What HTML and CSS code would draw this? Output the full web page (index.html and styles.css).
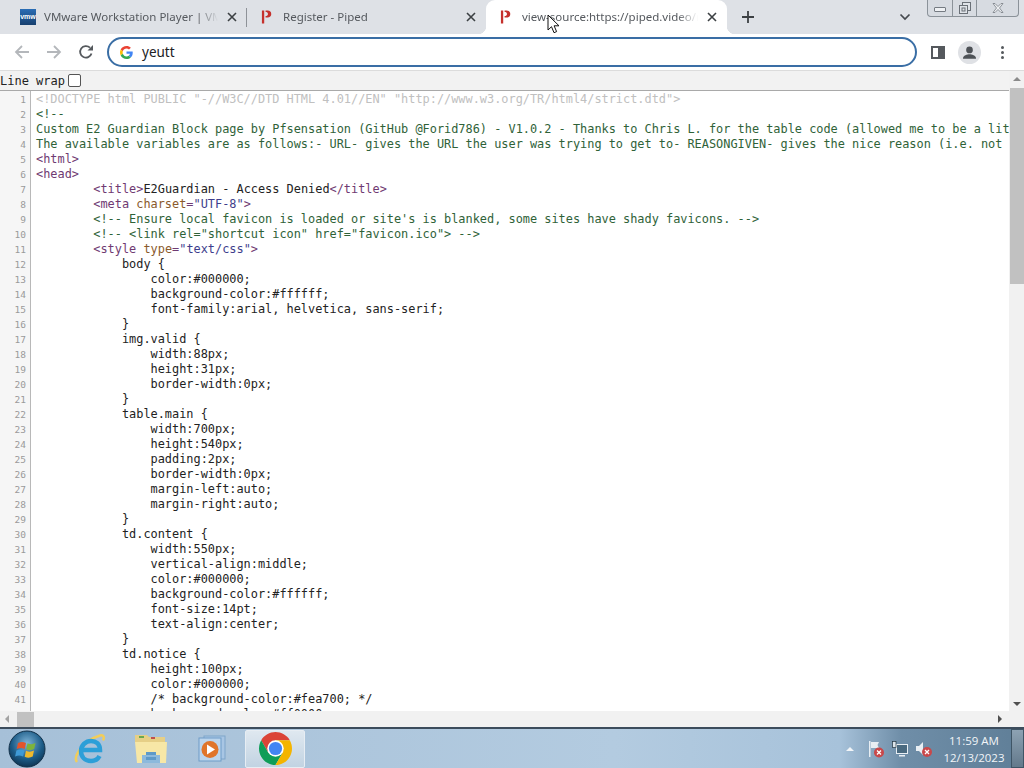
FILE: index.html
```html
<!DOCTYPE html>
<html>
<head>
    <title>view-source:https://piped.video/</title>
    <link rel="stylesheet" href="styles.css">
</head>
<body>
    <div class="tabstrip">
        <div class="tab">
            <span class="vmw-icon">vmw</span>
            <span class="tab-title">VMware Workstation Player | VMware</span>
            <svg class="tab-close" viewBox="0 0 10 10"><path d="M1 1l8 8M9 1l-8 8"/></svg>
        </div>
        <div class="tab tab-sep">
            <svg class="piped-icon" viewBox="0 0 12 14"><path d="M1 0h2.500v14H1zM5 0h2.200c2.600 0 4 1.500 4 3.700 0 2.400-1.600 3.900-4 3.900H5V6c1.500 0 2.600-.6 2.600-2.200S6.600 1.500 5 1.500z"/></svg>
            <span class="tab-title">Register - Piped</span>
            <svg class="tab-close" viewBox="0 0 10 10"><path d="M1 1l8 8M9 1l-8 8"/></svg>
        </div>
        <div class="tab tab-active">
            <svg class="piped-icon" viewBox="0 0 12 14"><path d="M1 0h2.500v14H1zM5 0h2.200c2.600 0 4 1.500 4 3.700 0 2.400-1.600 3.900-4 3.900H5V6c1.500 0 2.600-.6 2.600-2.200S6.600 1.500 5 1.500z"/></svg>
            <span class="tab-title">view-source:https://piped.video/register</span>
            <svg class="tab-close" viewBox="0 0 10 10"><path d="M1 1l8 8M9 1l-8 8"/></svg>
        </div>
        <svg class="new-tab" viewBox="0 0 14 14"><path d="M7 1v12M1 7h12"/></svg>
        <svg class="tab-list" viewBox="0 0 12 8"><path d="M1.500 1.500L6 6l4.500-4.500"/></svg>
        <div class="win-controls">
            <div class="win-btn win-min"><span class="min-glyph"></span></div>
            <div class="win-btn win-max">
                <svg viewBox="0 0 12 12"><rect x="3.500" y="0.500" width="8" height="8"/><rect x="0.500" y="3.500" width="8" height="8"/><rect x="3" y="6" width="3" height="3"/></svg>
            </div>
            <div class="win-btn win-close">
                <svg viewBox="0 0 12 10"><path d="M1 .5h2l3 3 3-3h2L7.500 5 11 9.500H9L6 6.500 3 9.500H1L4.500 5z"/></svg>
            </div>
        </div>
    </div>

    <div class="toolbar">
        <svg class="nav-icon nav-off" viewBox="0 0 16 16"><path d="M15 8H2M8 2L2 8l6 6"/></svg>
        <svg class="nav-icon nav-off" viewBox="0 0 16 16"><path d="M1 8h13M8 2l6 6-6 6"/></svg>
        <svg class="nav-icon nav-reload" viewBox="0 0 16 16"><path d="M13.500 9.500A5.800 5.800 0 1 1 12 3.700"/><path class="fill" d="M9.500 6.500H15V1z"/></svg>
        <div class="omnibox">
            <svg class="g-icon" viewBox="0 0 48 48">
                <path fill="#EA4335" d="M24 9.500c3.540 0 6.710 1.220 9.210 3.600l6.850-6.850C35.900 2.380 30.470 0 24 0 14.620 0 6.510 5.380 2.560 13.220l7.980 6.190C12.430 13.720 17.740 9.500 24 9.500z"/>
                <path fill="#4285F4" d="M46.980 24.550c0-1.570-.15-3.090-.38-4.550H24v9.020h12.940c-.58 2.960-2.260 5.480-4.780 7.180l7.730 6c4.510-4.180 7.090-10.360 7.090-17.650z"/>
                <path fill="#FBBC05" d="M10.530 28.590c-.48-1.450-.76-2.990-.76-4.590s.27-3.140.76-4.590l-7.980-6.190C.92 16.460 0 20.120 0 24c0 3.880.92 7.540 2.560 10.780l7.970-6.190z"/>
                <path fill="#34A853" d="M24 48c6.480 0 11.930-2.130 15.890-5.810l-7.730-6c-2.150 1.450-4.920 2.300-8.160 2.300-6.260 0-11.570-4.220-13.470-9.910l-7.980 6.190C6.510 42.620 14.620 48 24 48z"/>
            </svg>
            <span class="omni-text">yeutt</span>
        </div>
        <div class="side-panel"><span></span></div>
        <div class="profile">
            <svg viewBox="0 0 22 22"><circle cx="11" cy="11" r="11" fill="#dfe1e5"/><circle cx="11" cy="8.500" r="3.200" fill="#4d5156"/><path fill="#4d5156" d="M4.800 16.500c0-2.700 4-3.800 6.200-3.800s6.200 1.100 6.200 3.800V17H4.800z"/></svg>
        </div>
        <div class="menu-dots"><span></span><span></span><span></span></div>
    </div>

    <div class="viewer">
        <div class="viewer-top">
            <div class="viewer-main">
                <div class="wrap-row">
                    <label class="wrap-label">Line wrap</label>
                    <input class="wrap-check" type="checkbox">
                </div>
                <div class="code">
                    <div class="gutter">
                        <div>1</div><div>2</div><div>3</div><div>4</div><div>5</div><div>6</div><div>7</div>
                        <div>8</div><div>9</div><div>10</div><div>11</div><div>12</div><div>13</div><div>14</div>
                        <div>15</div><div>16</div><div>17</div><div>18</div><div>19</div><div>20</div><div>21</div>
                        <div>22</div><div>23</div><div>24</div><div>25</div><div>26</div><div>27</div><div>28</div>
                        <div>29</div><div>30</div><div>31</div><div>32</div><div>33</div><div>34</div><div>35</div>
                        <div>36</div><div>37</div><div>38</div><div>39</div><div>40</div><div>41</div><div>42</div>
                    </div>
                    <div class="source">
                        <div class="dt">&lt;!DOCTYPE html PUBLIC "-//W3C//DTD HTML 4.01//EN" "http://www.w3.org/TR/html4/strict.dtd"&gt;</div>
                        <div class="cm">&lt;!--</div>
                        <div class="cm">Custom E2 Guardian Block page by Pfsensation (GitHub @Forid786) - V1.0.2 - Thanks to Chris L. for the table code (allowed me to be a little lazy)</div>
                        <div class="cm">The available variables are as follows:- URL- gives the URL the user was trying to get to- REASONGIVEN- gives the nice reason (i.e. not so technical)</div>
                        <div><span class="tg">&lt;html&gt;</span></div>
                        <div><span class="tg">&lt;head&gt;</span></div>
                        <div>        <span class="tg">&lt;title&gt;</span>E2Guardian - Access Denied<span class="tg">&lt;/title&gt;</span></div>
                        <div>        <span class="tg">&lt;meta </span><span class="an">charset</span><span class="tg">=</span><span class="av">"UTF-8"</span><span class="tg">&gt;</span></div>
                        <div class="cm">        &lt;!-- Ensure local favicon is loaded or site's is blanked, some sites have shady favicons. --&gt;</div>
                        <div class="cm">        &lt;!-- &lt;link rel="shortcut icon" href="favicon.ico"&gt; --&gt;</div>
                        <div>        <span class="tg">&lt;style </span><span class="an">type</span><span class="tg">=</span><span class="av">"text/css"</span><span class="tg">&gt;</span></div>
                        <div>            body {</div>
                        <div>                color:#000000;</div>
                        <div>                background-color:#ffffff;</div>
                        <div>                font-family:arial, helvetica, sans-serif;</div>
                        <div>            }</div>
                        <div>            img.valid {</div>
                        <div>                width:88px;</div>
                        <div>                height:31px;</div>
                        <div>                border-width:0px;</div>
                        <div>            }</div>
                        <div>            table.main {</div>
                        <div>                width:700px;</div>
                        <div>                height:540px;</div>
                        <div>                padding:2px;</div>
                        <div>                border-width:0px;</div>
                        <div>                margin-left:auto;</div>
                        <div>                margin-right:auto;</div>
                        <div>            }</div>
                        <div>            td.content {</div>
                        <div>                width:550px;</div>
                        <div>                vertical-align:middle;</div>
                        <div>                color:#000000;</div>
                        <div>                background-color:#ffffff;</div>
                        <div>                font-size:14pt;</div>
                        <div>                text-align:center;</div>
                        <div>            }</div>
                        <div>            td.notice {</div>
                        <div>                height:100px;</div>
                        <div>                color:#000000;</div>
                        <div>                /* background-color:#fea700; */</div>
                        <div>                background-color:#ff0000;</div>
                    </div>
                </div>
            </div>
            <div class="vscroll">
                <span class="arrow-up"></span>
                <div class="vthumb"></div>
                <span class="arrow-down"></span>
            </div>
        </div>
        <div class="hscroll">
            <span class="arrow-left"></span>
            <div class="hthumb"></div>
            <span class="arrow-right"></span>
        </div>
    </div>

    <div class="taskbar">
        <svg class="orb" viewBox="0 0 38 38">
            <defs>
                <radialGradient id="orbfill" cx="50%" cy="35%" r="70%"><stop offset="0" stop-color="#7fb4d8"/><stop offset="0.6" stop-color="#1c5c88"/><stop offset="1" stop-color="#0c2c48"/></radialGradient>
            </defs>
            <circle cx="19" cy="19" r="18" fill="url(#orbfill)" stroke="#123049"/>
            <path fill="#e2542c" d="M10 13c3-1.500 5-1.500 8 0l-1.300 6c-3-1.300-5-1.300-8 0z"/>
            <path fill="#7db33c" d="M19.500 13.300c3 1.300 5 1.300 8-.2l-1.300 6c-3 1.500-5 1.500-8 .2z"/>
            <path fill="#3f9ad6" d="M8.400 20.500c3-1.300 5-1.300 8 0l-1.300 6c-3-1.300-5-1.300-8 0z"/>
            <path fill="#f0b92c" d="M18 20.800c3 1.300 5 1.300 8-.2l-1.300 6c-3 1.500-5 1.500-8 .2z"/>
        </svg>
        <svg class="ie" viewBox="0 0 32 32">
            <path fill="none" stroke="#f2cd5a" stroke-width="2.500" d="M3 29C-1 24 8 8 26 2.500c4-1 4.500 2 3 5"/>
            <path fill="none" stroke="#2c9fd8" stroke-width="4.500" d="M8 17h18c0-6-4-9-9-9s-10 4-10 10 4 10 10 10c4 0 7-2 8.500-5"/>
        </svg>
        <svg class="folder" viewBox="0 0 34 32">
            <path fill="#e6cf86" d="M1 2h12l2 2h16v6H1z"/>
            <rect x="5" y="3" width="5" height="2" fill="#6aa84f"/>
            <rect x="17" y="4" width="4" height="2" fill="#c0504d"/>
            <path fill="#f7e7a6" d="M1 9h32l-1 21H3z"/>
            <path fill="#8db9dc" d="M8 22h18v8H8z"/>
            <path fill="#5f9ac8" d="M12 19h10v3H12zM12 24h10v3H12z"/>
        </svg>
        <svg class="wmp" viewBox="0 0 28 28">
            <rect x="6" y="1" width="21" height="23" fill="#a8c6e4" stroke="#7fa5ca"/>
            <rect x="1" y="3" width="22" height="23" fill="#bcd5ec" stroke="#6f9cc8"/>
            <circle cx="12" cy="14.500" r="8.500" fill="#e0752a"/>
            <path fill="#fff" d="M9 9.500l8 5-8 5z"/>
        </svg>
        <div class="task-active">
            <svg class="chrome" viewBox="4 4 40 40">
                <path fill="#db4437" d="M6.680 14A20 20 0 0 1 41.320 14H24L15.340 29z"/>
                <path fill="#0f9d58" d="M6.680 14A20 20 0 0 0 24 44L32.660 29H15.340z"/>
                <path fill="#f4b400" d="M41.320 14A20 20 0 0 1 24 44L32.660 29 24 14z"/>
                <circle cx="24" cy="24" r="10" fill="#fff"/>
                <circle cx="24" cy="24" r="8" fill="#4285f4"/>
            </svg>
        </div>
        <div class="tray">
            <span class="tray-up"></span>
            <svg class="tray-icon" viewBox="0 0 18 18">
                <path fill="#e8eef3" d="M2 1h1.500v16H2zM4 2h8l-1.500 3L12 8H4z"/>
                <circle cx="12" cy="12.500" r="5" fill="#c9484a"/>
                <path stroke="#fff" stroke-width="1.300" d="M10 10.500l4 4M14 10.500l-4 4"/>
            </svg>
            <svg class="tray-icon" viewBox="0 0 18 18">
                <rect x="5.500" y="4.500" width="11" height="9" fill="#4a6a80" stroke="#e8eef3"/>
                <rect x="1.500" y="1.500" width="3.500" height="6" fill="#dfe6ec" stroke="#22343f" stroke-width="0.700"/>
                <path fill="#e8eef3" d="M8 15h6v1.500H8z"/>
            </svg>
            <svg class="tray-icon" viewBox="0 0 18 18">
                <path fill="#e8eef3" d="M1 6h3l4-4v13l-4-4H1z"/>
                <circle cx="12" cy="12" r="5" fill="#c9484a"/>
                <path stroke="#fff" stroke-width="1.300" d="M10 10l4 4M14 10l-4 4"/>
            </svg>
            <div class="clock">
                <div>11:59 AM</div>
                <div>12/13/2023</div>
            </div>
            <div class="show-desktop"></div>
        </div>
    </div>

    <svg class="cursor" viewBox="0 0 13 20">
        <path d="M1 1v15l3.500-3.300 2.500 6 2.600-1.100-2.500-5.800H12z"/>
    </svg>
</body>
</html>
```
FILE: styles.css
```css
* {
    box-sizing: border-box;
}
html, body {
    margin: 0;
    height: 100%;
}
body {
    display: flex;
    flex-direction: column;
    height: 768px;
    overflow: hidden;
    font-family: "Noto Sans", sans-serif;
    background: #fff;
}

/* tab strip */
.tabstrip {
    display: flex;
    align-items: center;
    height: 34px;
    flex-shrink: 0;
    padding-left: 8px;
    background: #dee1e6;
}
.tab {
    position: relative;
    display: flex;
    align-items: center;
    width: 239px;
    height: 34px;
    padding: 0 10px 1px 12px;
    color: #55595e;
    font-size: 11.500px;
}
.tab-sep::before {
    content: "";
    position: absolute;
    left: -1px;
    top: 8px;
    width: 1px;
    height: 19px;
    background: #8e9298;
}
.tab-active {
    width: 241px;
    padding-left: 12px;
    background: #fff;
    border-radius: 9px 9px 0 0;
}
.tab-active::before,
.tab-active::after {
    content: "";
    position: absolute;
    bottom: 0;
    width: 8px;
    height: 8px;
}
.tab-active::before {
    left: -8px;
    background: radial-gradient(circle at 0 0, #dee1e6 8px, #fff 8.500px);
}
.tab-active::after {
    right: -8px;
    background: radial-gradient(circle at 100% 0, #dee1e6 8px, #fff 8.500px);
}
.vmw-icon {
    width: 16px;
    height: 16px;
    flex-shrink: 0;
    margin-right: 8px;
    background: linear-gradient(#2a6db5, #17406f);
    color: #fff;
    font-family: "Liberation Sans", sans-serif;
    font-size: 7px;
    font-weight: bold;
    line-height: 16px;
    text-align: center;
}
.piped-icon {
    width: 11px;
    height: 14px;
    flex-shrink: 0;
    margin: 0 11px 0 2px;
    fill: #c5302c;
}
.tab-title {
    flex: 1;
    overflow: hidden;
    white-space: nowrap;
    -webkit-mask-image: linear-gradient(to right, #000 88%, transparent 100%);
    mask-image: linear-gradient(to right, #000 88%, transparent 100%);
}
.tab-close {
    width: 10px;
    height: 10px;
    flex-shrink: 0;
    margin-left: 9px;
    fill: none;
    stroke: #3c4043;
    stroke-width: 1.600;
}
.new-tab {
    width: 14px;
    height: 14px;
    margin-left: 14px;
    fill: none;
    stroke: #3c4043;
    stroke-width: 1.800;
}
.tab-list {
    width: 12px;
    height: 8px;
    margin-left: 144px;
    fill: none;
    stroke: #45494e;
    stroke-width: 1.700;
}
.win-controls {
    display: flex;
    align-self: flex-start;
    width: 92px;
    height: 17px;
    margin-left: 16px;
    border: 1px solid #8b9299;
    border-top: none;
    border-radius: 0 0 4px 4px;
    background: #d7dbe1;
}
.win-btn {
    display: flex;
    align-items: center;
    justify-content: center;
    border-right: 1px solid #8b9299;
}
.win-min { width: 25px; }
.win-max { width: 24px; }
.win-close { flex: 1; border-right: none; }
.min-glyph {
    width: 12px;
    height: 5px;
    border: 1px solid #757b82;
    border-radius: 1px;
    background: #eef0f3;
    margin-top: 3px;
}
.win-max svg {
    width: 12px;
    height: 12px;
    fill: #dfe3e8;
    stroke: #6a7077;
}
.win-close svg {
    width: 12px;
    height: 10px;
    fill: #eef0f3;
    stroke: #6a7077;
    stroke-width: 0.700;
}

/* toolbar */
.toolbar {
    display: flex;
    align-items: center;
    height: 37px;
    flex-shrink: 0;
    padding-left: 14px;
    background: #fff;
    border-bottom: 1px solid #dcdcdc;
}
.nav-icon {
    width: 16px;
    height: 16px;
    margin-right: 16px;
    fill: none;
    stroke-width: 1.800;
}
.nav-off { stroke: #b4b7bb; }
.nav-reload { stroke: #55595d; margin-right: 13px; }
.nav-reload .fill { fill: #55595d; stroke: none; }
.omnibox {
    display: flex;
    align-items: center;
    width: 810px;
    height: 30px;
    padding-left: 11px;
    border: 2px solid #3a6ea5;
    border-radius: 15px;
}
.g-icon {
    width: 13px;
    height: 13px;
    margin-right: 9px;
}
.omni-text {
    color: #202124;
    font-size: 13.500px;
}
.side-panel {
    display: flex;
    justify-content: flex-end;
    width: 14px;
    height: 13px;
    margin-left: 14px;
    border: 2px solid #55595d;
}
.side-panel span {
    width: 5px;
    background: #55595d;
}
.profile {
    width: 23px;
    height: 23px;
    margin-left: 13px;
}
.profile svg {
    display: block;
    width: 23px;
    height: 23px;
}
.menu-dots {
    display: flex;
    flex-direction: column;
    gap: 2px;
    margin-left: 20px;
}
.menu-dots span {
    width: 3px;
    height: 3px;
    border-radius: 50%;
    background: #55595d;
}

/* view-source page */
.viewer {
    display: flex;
    flex-direction: column;
    flex: 1;
    min-height: 0;
}
.viewer-top {
    display: flex;
    flex: 1;
    min-height: 0;
}
.viewer-main {
    display: flex;
    flex-direction: column;
    flex: 1;
    min-width: 0;
}
.wrap-row {
    display: flex;
    align-items: center;
    height: 20px;
    flex-shrink: 0;
    background: #f2f2f2;
    border-bottom: 1px solid #a9a9a9;
    font-family: "DejaVu Sans Mono", monospace;
    font-size: 12px;
    color: #222;
}
.wrap-check {
    appearance: none;
    width: 13px;
    height: 13px;
    margin: 0 0 0 3px;
    background: #fff;
    border: 1px solid #555;
    border-radius: 2px;
}
.code {
    display: flex;
    flex: 1;
    min-height: 0;
    overflow: hidden;
    padding-top: 1px;
    font-family: "DejaVu Sans Mono", monospace;
    font-size: 11.900px;
    line-height: 15px;
    background: linear-gradient(to right, #f6f6f6 30px, #b8b8b8 30px, #b8b8b8 31px, #fff 31px);
}
.gutter {
    width: 31px;
    flex-shrink: 0;
    padding-right: 5px;
    color: #9a9a9a;
    font-size: 9.500px;
    text-align: right;
}
.source {
    flex: 1;
    min-width: 0;
    padding-left: 5px;
    overflow: hidden;
    color: #222;
}
.source div {
    height: 15px;
    white-space: pre;
}
.source .cm { color: #2f6238; }
.source .dt { color: #c0c0c0; }
.tg { color: #6f3a72; }
.an { color: #8a5a2c; }
.av { color: #3d3d8c; }

/* scrollbars */
.vscroll {
    display: flex;
    flex-direction: column;
    align-items: center;
    width: 15px;
    flex-shrink: 0;
    padding-top: 6px;
    background: #f1f1f1;
}
.vthumb {
    width: 14px;
    height: 196px;
    margin-top: 7px;
    background: #c1c1c1;
}
.arrow-up, .arrow-down, .arrow-left, .arrow-right {
    width: 0;
    height: 0;
    border: 4px solid transparent;
}
.arrow-up { border-bottom-color: #8a8a8a; border-top-width: 0; }
.arrow-down { border-top-color: #505050; border-bottom-width: 0; margin-top: auto; margin-bottom: 5px; }
.arrow-left { border-right-color: #a3a3a3; border-left-width: 0; }
.arrow-right { border-left-color: #505050; border-right-width: 0; margin-left: auto; }
.hscroll {
    display: flex;
    align-items: center;
    height: 16px;
    flex-shrink: 0;
    padding: 0 22px 0 5px;
    background: #f1f1f1;
}
.hthumb {
    width: 17px;
    height: 15px;
    margin-left: 8px;
    background: #c1c1c1;
}

/* taskbar */
.taskbar {
    display: flex;
    align-items: center;
    height: 41px;
    flex-shrink: 0;
    padding-left: 8px;
    border-top: 2px solid #3c4c5c;
    background: linear-gradient(to right, #a6c0d8 0, #b3cbe0 60%, #a7c2da 82%, #6f8ea8 88%, #5f7e97 100%);
}
.orb { width: 38px; height: 38px; }
.ie { width: 32px; height: 32px; margin-left: 28px; }
.folder { width: 34px; height: 32px; margin-left: 28px; }
.wmp { width: 28px; height: 28px; margin-left: 30px; }
.task-active {
    display: flex;
    align-items: center;
    justify-content: center;
    width: 60px;
    height: 38px;
    margin-left: 19px;
    border: 1px solid #e7edf3;
    border-radius: 2px;
    background: linear-gradient(#dfe8f0, #c2d3e2);
}
.chrome { width: 33px; height: 33px; }
.tray {
    display: flex;
    align-items: center;
    height: 100%;
    margin-left: auto;
}
.tray-up {
    width: 0;
    height: 0;
    margin-right: 13px;
    border: 4px solid transparent;
    border-top-width: 0;
    border-bottom-color: #f2f5f8;
}
.tray-icon {
    width: 18px;
    height: 18px;
    margin-right: 6px;
}
.clock {
    width: 68px;
    margin-left: 1px;
    color: #f2f5f8;
    font-family: "Open Sans", sans-serif;
    font-size: 11.500px;
    line-height: 17px;
    text-align: center;
}
.show-desktop {
    width: 13px;
    height: 100%;
    margin-left: 3px;
    border: 1px solid #3f5566;
    background: linear-gradient(#8da2b3, #63798b);
}

/* mouse pointer, lies over the tab */
.cursor {
    position: absolute;
    left: 547px;
    top: 14px;
    width: 13px;
    height: 20px;
    fill: #fff;
    stroke: #111;
    stroke-width: 1;
}
```
